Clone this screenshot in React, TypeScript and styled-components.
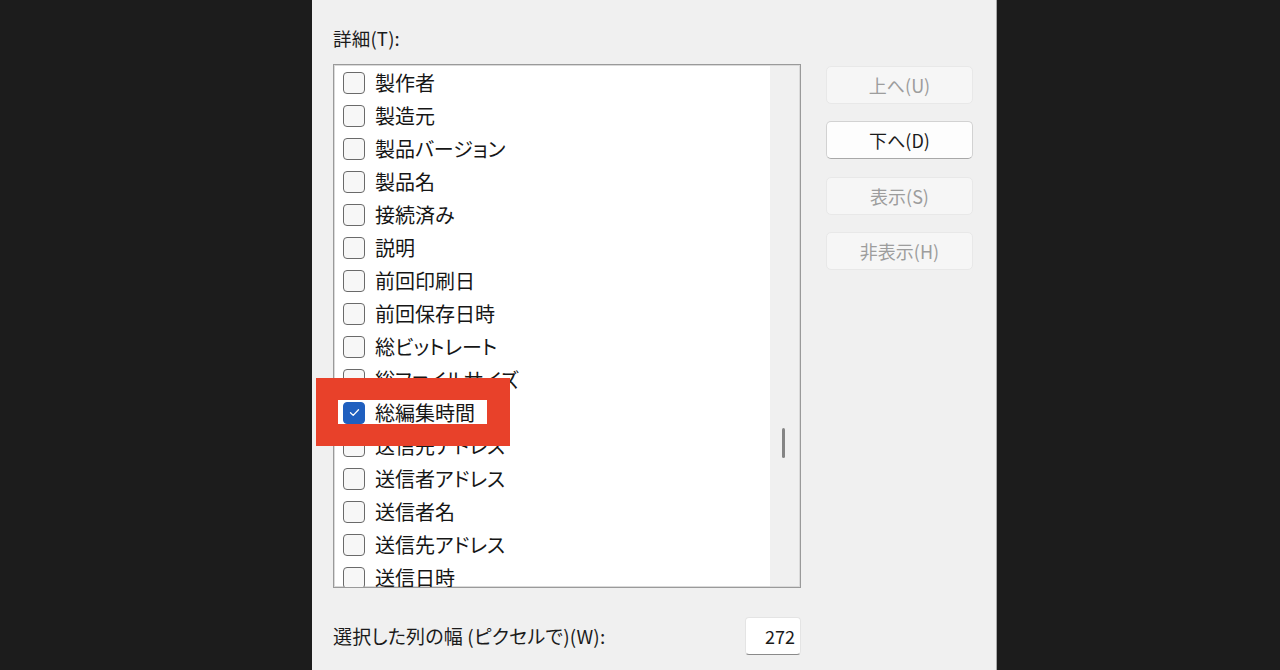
import styled, { createGlobalStyle } from 'styled-components';

const GlobalStyle = createGlobalStyle`
  html, body {
    margin: 0;
    padding: 0;
    background: #1c1c1c;
  }
  body {
    font-family: "Noto Sans CJK JP", "Noto Sans", sans-serif;
    font-feature-settings: "palt";
  }
`;

const items = [
  '製作者',
  '製造元',
  '製品バージョン',
  '製品名',
  '接続済み',
  '説明',
  '前回印刷日',
  '前回保存日時',
  '総ビットレート',
  '総ファイルサイズ',
  '総編集時間',
  '送信先アドレス',
  '送信者アドレス',
  '送信者名',
  '送信先アドレス',
  '送信日時',
];

const Screen = styled.div`
  width: 1280px;
  height: 670px;
  overflow: hidden;
  display: flex;
`;

const Panel = styled.div`
  margin-left: 312px;
  width: 685px;
  height: 670px;
  background: #f0f0f0;
  border-right: 1px solid #a9a9a9;
  box-sizing: border-box;
  padding: 26px 0 0 21px;
  display: flex;
  flex-direction: column;
`;

const Label = styled.div<{ $size?: number }>`
  font-size: ${(p) => p.$size ?? 18.5}px;
  line-height: 24px;
  color: #1b1b1b;
  letter-spacing: 0.2px;
`;

const Main = styled.div`
  display: flex;
  gap: 25px;
  margin-top: 14px;
`;

const ListWrap = styled.div`
  position: relative;
  width: 468px;
  height: 524px;
  box-sizing: border-box;
  border: 1px solid #9a9a9a;
  box-shadow: inset 0 0 0 1px #dadada;
  background: #ffffff;
  display: flex;
`;

const Rows = styled.div`
  flex: 1;
  overflow: hidden;
  padding-top: 1px;
`;

const Row = styled.div`
  height: 33px;
  display: flex;
  align-items: center;
  padding-left: 9px;
  gap: 10px;
  font-size: 20px;
  color: #161616;
  white-space: nowrap;
`;

const Box = styled.span<{ $checked?: boolean }>`
  width: 20px;
  height: 20px;
  flex: none;
  border-radius: 4px;
  border: 1px solid ${(p) => (p.$checked ? '#1f5fbf' : '#6a6a6a')};
  background: ${(p) => (p.$checked ? '#1f5fbf' : '#f7f7f7')};
  display: flex;
  align-items: center;
  justify-content: center;
`;

const Track = styled.div`
  width: 29px;
  background: #f0f0f0;
  margin: 1px 1px 1px 0;
  position: relative;
`;

const Thumb = styled.div`
  position: absolute;
  left: 12px;
  top: 362px;
  width: 3px;
  height: 30px;
  border-radius: 2px;
  background: #858585;
`;

const Highlight = styled.div`
  position: absolute;
  left: -18px;
  top: 313px;
  width: 194px;
  height: 68px;
  box-sizing: border-box;
  border: 22px solid #e8412a;
  border-right-width: 23px;
  pointer-events: none;
`;

const Buttons = styled.div`
  display: flex;
  flex-direction: column;
  gap: 17.3px;
  padding-top: 2px;
`;

const Button = styled.button<{ $enabled?: boolean }>`
  width: 147px;
  height: 38px;
  border-radius: 5px;
  font-family: inherit;
  font-size: 18px;
  font-feature-settings: "palt";
  cursor: default;
  box-sizing: border-box;
  padding: 0;
  background: ${(p) => (p.$enabled ? '#fdfdfd' : '#f6f6f6')};
  color: ${(p) => (p.$enabled ? '#1b1b1b' : '#9d9d9d')};
  border: 1px solid ${(p) => (p.$enabled ? '#d2d2d2' : '#e8e8e8')};
  border-bottom-color: ${(p) => (p.$enabled ? '#a8a8a8' : '#e8e8e8')};
`;

const Footer = styled.div`
  display: flex;
  align-items: center;
  justify-content: space-between;
  width: 468px;
  margin-top: 29px;
`;

const WidthInput = styled.div`
  width: 56px;
  height: 38px;
  box-sizing: border-box;
  background: #ffffff;
  border: 1px solid #e4e4e4;
  border-bottom: 1px solid #8a8a8a;
  border-radius: 4px;
  display: flex;
  align-items: center;
  justify-content: flex-end;
  padding-right: 5px;
  font-size: 18px;
  color: #1b1b1b;
`;

const Check = () => (
  <svg width="13" height="13" viewBox="0 0 13 13" fill="none">
    <path d="M2.5 6.8 L5.2 9.4 L10.5 3.8" stroke="#ffffff" strokeWidth="1.3" strokeLinecap="round" strokeLinejoin="round" />
  </svg>
);

const App = () => {
  return (
    <Screen>
      <GlobalStyle />
      <Panel>
        <Label>詳細(T):</Label>
        <Main>
          <ListWrap>
            <Rows>
              {items.map((name, i) => {
                const checked = name === '総編集時間';
                return (
                  <Row key={i}>
                    <Box $checked={checked}>{checked && <Check />}</Box>
                    {name}
                  </Row>
                );
              })}
            </Rows>
            <Track>
              <Thumb />
            </Track>
            <Highlight />
          </ListWrap>
          <Buttons>
            <Button>上へ(U)</Button>
            <Button $enabled>下へ(D)</Button>
            <Button>表示(S)</Button>
            <Button>非表示(H)</Button>
          </Buttons>
        </Main>
        <Footer>
          <Label $size={19}>選択した列の幅 (ピクセルで)(W):</Label>
          <WidthInput>272</WidthInput>
        </Footer>
      </Panel>
    </Screen>
  );
};

export default App;
